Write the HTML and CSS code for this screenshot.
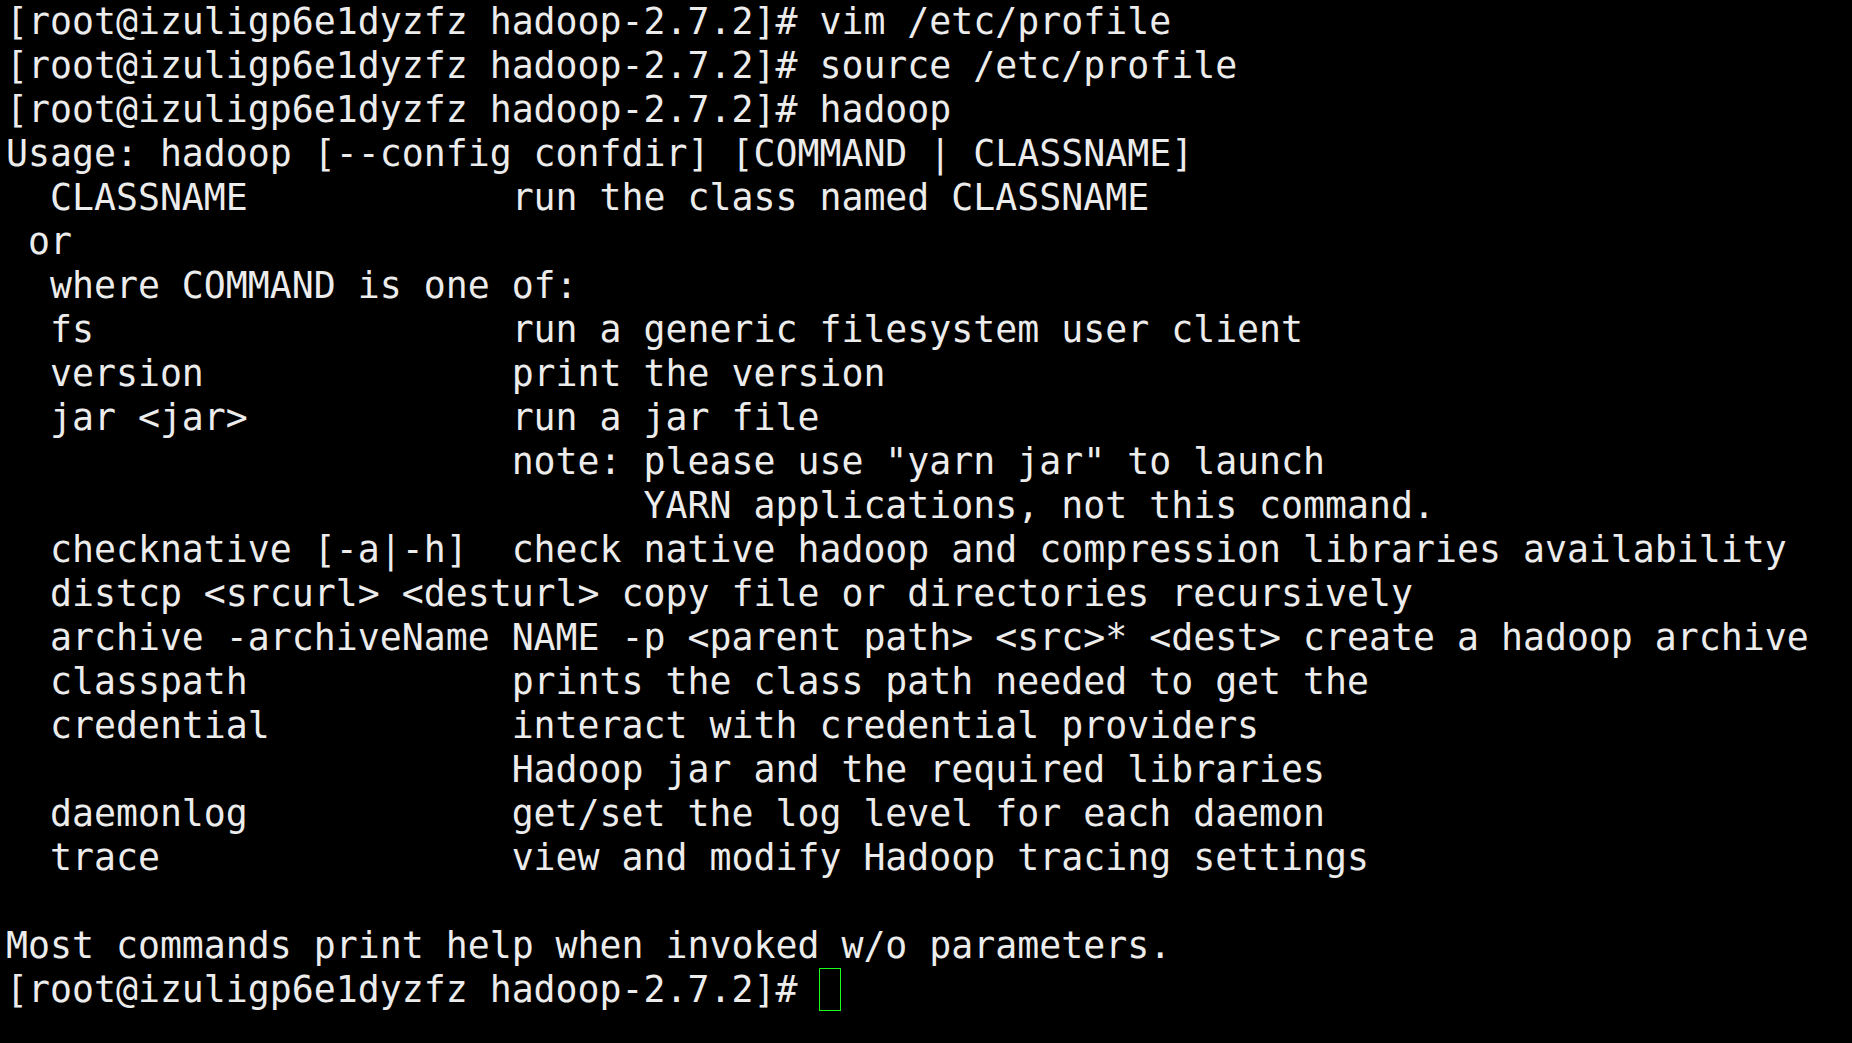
FILE: index.html
```html
<!DOCTYPE html>
<html>
<head>
<meta charset="utf-8">
<link rel="stylesheet" href="styles.css">
</head>
<body>
<pre class="term">[root@izuligp6e1dyzfz hadoop-2.7.2]# vim /etc/profile
[root@izuligp6e1dyzfz hadoop-2.7.2]# source /etc/profile
[root@izuligp6e1dyzfz hadoop-2.7.2]# hadoop
Usage: hadoop [--config confdir] [COMMAND | CLASSNAME]
  CLASSNAME            run the class named CLASSNAME
 or
  where COMMAND is one of:
  fs                   run a generic filesystem user client
  version              print the version
  jar &lt;jar&gt;            run a jar file
                       note: please use "yarn jar" to launch
                             YARN applications, not this command.
  checknative [-a|-h]  check native hadoop and compression libraries availability
  distcp &lt;srcurl&gt; &lt;desturl&gt; copy file or directories recursively
  archive -archiveName NAME -p &lt;parent path&gt; &lt;src&gt;* &lt;dest&gt; create a hadoop archive
  classpath            prints the class path needed to get the
  credential           interact with credential providers
                       Hadoop jar and the required libraries
  daemonlog            get/set the log level for each daemon
  trace                view and modify Hadoop tracing settings

Most commands print help when invoked w/o parameters.
[root@izuligp6e1dyzfz hadoop-2.7.2]# <span class="cursor"> </span></pre>
</body>
</html>
```
FILE: styles.css
```css
html, body {
  margin: 0;
  padding: 0;
  background: #000;
  height: 100%;
}
.term {
  margin: 0;
  padding: 0 0 0 6px;
  font-family: "DejaVu Sans Mono", monospace;
  font-size: 36.52px;
  line-height: 44px;
  color: #ececec;
  white-space: pre;
}
.cursor {
  display: inline-block;
  width: 20px;
  height: 41px;
  border: 1px solid #1aff1a;
  vertical-align: top;
}
```
